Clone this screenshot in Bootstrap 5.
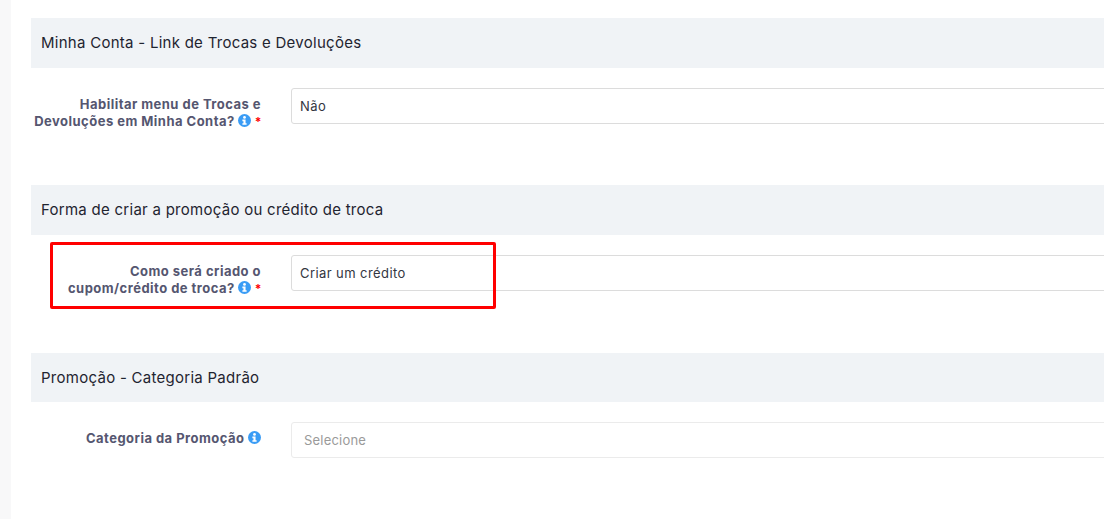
<!DOCTYPE html>
<html lang="pt-BR">
<head>
<meta charset="utf-8">
<title>Configurações</title>
<link href="https://cdn.jsdelivr.net/npm/bootstrap@5.3.0/dist/css/bootstrap.min.css" rel="stylesheet">
<style>
html, body { height: 100%; overflow: hidden; }
body { background: #fff; font-family: "Inter", "Liberation Sans", sans-serif; }
.shell { height: 519px; width: 1104px; overflow: hidden; }
.rail { width: 11px; flex: none; background: #f8f8f9; }
.pane { width: 1300px; flex: none; padding: 18px 0 0 20px; position: relative; }
.group-block { height: 167.4px; }
.group-head { height: 49.6px; background: #f0f3f6; padding: .5px 0 0 10px; color: #1f2430; font-size: 15px; letter-spacing: .27px; margin-bottom: 20px; }
.group-label { width: 230px; flex: none; margin-right: 30px; text-align: right; font-size: 13px; font-weight: 700; line-height: 17.5px; color: #555670; letter-spacing: .47px; padding-top: 8px; }
.group-field { flex: 1 1 auto; height: 36px; border: 1px solid #dcdcdc; border-radius: 3px; padding: 2px 8px 0; font-size: 13px; letter-spacing: .42px; color: #33363f; background: #fff; }
.group-field.is-empty { border-color: #ebebeb; color: #9a9a9a; padding: 0 8px 0 12px; letter-spacing: .2px; }
.info-dot { width: 13px; height: 13px; vertical-align: -1px; margin-left: 0; }
.req { color: #f00; font-size: 12px; line-height: 1; margin-right: -1px; }
.red-frame { position: absolute; left: 39px; top: 242px; width: 446px; height: 67px; border: 3px solid #f00; border-radius: 2px; pointer-events: none; }
</style>
</head>
<body>
<div class="shell d-flex">
  <div class="rail"></div>
  <div class="pane">
    <section class="group-block">
      <div class="group-head d-flex align-items-center">Minha Conta - Link de Trocas e Devoluções</div>
      <div class="d-flex">
        <div class="group-label"><span class="d-block">Habilitar menu de Trocas e</span>Devoluções em Minha Conta?
          <svg class="info-dot" viewBox="0 0 16 16"><circle cx="8" cy="8" r="8" fill="#3a9cf5"/><circle cx="8" cy="4.2" r="1.7" fill="#fff"/><path d="M5.4 6.8h3.9v4.5h1.3v2H5.4v-2h1.3V8.8H5.4z" fill="#fff"/></svg>
          <span class="req">*</span></div>
        <div class="group-field d-flex align-items-center">Não</div>
      </div>
    </section>
    <section class="group-block">
      <div class="group-head d-flex align-items-center">Forma de criar a promoção ou crédito de troca</div>
      <div class="d-flex">
        <div class="group-label"><span class="d-block">Como será criado o</span>cupom/crédito de troca?
          <svg class="info-dot" viewBox="0 0 16 16"><circle cx="8" cy="8" r="8" fill="#3a9cf5"/><circle cx="8" cy="4.2" r="1.7" fill="#fff"/><path d="M5.4 6.8h3.9v4.5h1.3v2H5.4v-2h1.3V8.8H5.4z" fill="#fff"/></svg>
          <span class="req">*</span></div>
        <div class="group-field d-flex align-items-center">Criar um crédito</div>
      </div>
    </section>
    <section class="group-block">
      <div class="group-head d-flex align-items-center">Promoção - Categoria Padrão</div>
      <div class="d-flex">
        <div class="group-label">Categoria da Promoção
          <svg class="info-dot" viewBox="0 0 16 16"><circle cx="8" cy="8" r="8" fill="#3a9cf5"/><circle cx="8" cy="4.2" r="1.7" fill="#fff"/><path d="M5.4 6.8h3.9v4.5h1.3v2H5.4v-2h1.3V8.8H5.4z" fill="#fff"/></svg></div>
        <div class="group-field is-empty d-flex align-items-center">Selecione</div>
      </div>
    </section>
    <div class="red-frame"></div>
  </div>
</div>
<script src="https://cdn.jsdelivr.net/npm/bootstrap@5.3.0/dist/js/bootstrap.bundle.min.js"></script>
</body>
</html>
